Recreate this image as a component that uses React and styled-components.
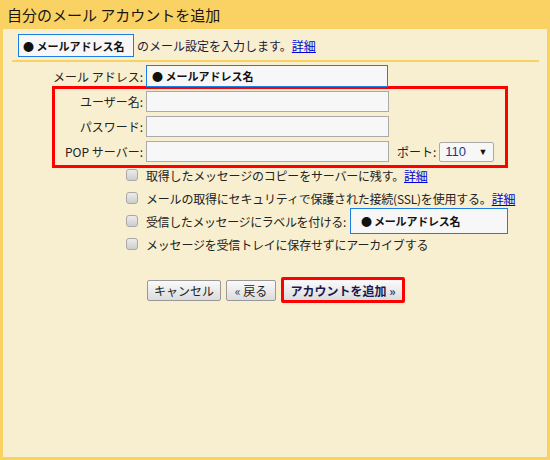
import React from 'react'
import styled, { createGlobalStyle } from 'styled-components'

const GlobalStyle = createGlobalStyle`
  body {
    margin: 0;
    font-family: "Noto Sans CJK JP", "Liberation Sans", sans-serif;
    color: #222;
  }
`

const Frame = styled.div`
  width: 550px;
  height: 460px;
  box-sizing: border-box;
  background: #fad264;
  padding: 0 3px 3px 3px;
  display: flex;
  flex-direction: column;
`

const TitleBar = styled.div`
  height: 29px;
  display: flex;
  align-items: center;
  padding-left: 4px;
  font-size: 15px;
  color: #1a1410;
`

const Content = styled.div`
  flex: 1;
  background: #f8efd0;
  padding: 5px 8px 0 9px;
  font-size: 12px;
`

const IntroRow = styled.div`
  display: flex;
  align-items: center;
  height: 23px;
  padding-left: 6px;
`

const NameBox = styled.div`
  box-sizing: border-box;
  width: ${p => p.$w}px;
  height: ${p => p.$h}px;
  border: 1px solid #1a7ee6;
  background: #f7f7f7;
  display: flex;
  align-items: center;
  padding-left: ${p => p.$pad}px;
  font-size: 11px;
  font-weight: bold;
  color: #111;
  white-space: nowrap;
`

const IntroText = styled.span`
  margin-left: 3px;
  color: #1c1838;
`

const Link = styled.a`
  color: #0000d8;
  text-decoration: underline;
  cursor: pointer;
`

const Divider = styled.div`
  margin-top: 3px;
  height: 2px;
  background: #fad264;
`

const MailRow = styled.div`
  display: grid;
  grid-template-columns: 131px 242px;
  column-gap: 3px;
  align-items: center;
  margin-top: 3px;
`

const Label = styled.span`
  text-align: right;
  white-space: nowrap;
`

const RedGroup = styled.div`
  box-sizing: border-box;
  width: 456px;
  margin: -1px 0 0 40px;
  border: 3px solid #ff0000;
  padding: 2px 0 3px 0;
  display: flex;
  flex-direction: column;
  gap: 4px;
`

const FieldRow = styled.div`
  display: grid;
  grid-template-columns: 88px 243px auto;
  column-gap: 3px;
  align-items: center;
`

const TextInput = styled.div`
  box-sizing: border-box;
  height: 21px;
  border: 1px solid #aaa;
  background: #f7f7f7;
`

const PortWrap = styled.div`
  display: flex;
  align-items: center;
  margin-left: 5px;
  gap: 3px;
`

const Select = styled.div`
  box-sizing: border-box;
  width: 55px;
  height: 20px;
  border: 1px solid #aaa;
  border-radius: 2px;
  background: #f7f7f7;
  display: flex;
  align-items: center;
  justify-content: space-between;
  padding: 0 6px 0 5px;
  font-family: "Liberation Sans", sans-serif;
  font-size: 13px;
  color: #1b3a80;
`

const Arrow = styled.span`
  font-size: 9px;
  color: #111;
`

const CheckList = styled.div`
  display: flex;
  flex-direction: column;
  gap: 9px;
  padding-left: 114px;
`

const CheckRow = styled.div`
  height: 14px;
  display: flex;
  align-items: center;
  white-space: nowrap;
  letter-spacing: -0.2px;
`

const Check = styled.span`
  box-sizing: border-box;
  width: 12px;
  height: 12px;
  border: 1px solid #a8a8a8;
  border-radius: 3px;
  background: linear-gradient(#ececec, #cdcdcd);
  margin-right: 8px;
  flex: none;
`

const LabelGap = styled.span`
  margin-right: 4px;
  letter-spacing: -0.4px;
`

const ButtonRow = styled.div`
  display: flex;
  align-items: center;
  gap: 5px;
  margin-top: 26px;
  padding-left: 135px;
`

const Button = styled.button`
  box-sizing: border-box;
  height: ${p => (p.$primary ? 26 : 21)}px;
  width: ${p => p.$w}px;
  padding: 0;
  border: ${p => (p.$primary ? '3px solid #ff0000' : '1px solid #999')};
  border-radius: 2px;
  background: linear-gradient(#fafafa, #dcdcdc);
  font-family: "Noto Sans CJK JP", "Liberation Sans", sans-serif;
  font-size: 12px;
  font-weight: ${p => (p.$primary ? 'bold' : 'normal')};
  color: ${p => (p.$primary ? '#1a1a50' : '#222')};
  cursor: pointer;
`

const Quote = styled.span`
  color: #1b3a80;
`

export default function App() {
  return (
    <>
      <GlobalStyle />
      <Frame>
        <TitleBar>自分のメール アカウントを追加</TitleBar>
        <Content>
          <IntroRow>
            <NameBox $w={116} $h={23} $pad={4}>● メールアドレス名</NameBox>
            <IntroText>
              のメール設定を入力します。<Link>詳細</Link>
            </IntroText>
          </IntroRow>
          <Divider />
          <MailRow>
            <Label>メール アドレス:</Label>
            <NameBox $w={242} $h={22} $pad={5}>● メールアドレス名</NameBox>
          </MailRow>
          <RedGroup>
            <FieldRow>
              <Label>ユーザー名:</Label>
              <TextInput />
            </FieldRow>
            <FieldRow>
              <Label>パスワード:</Label>
              <TextInput />
            </FieldRow>
            <FieldRow>
              <Label>POP サーバー:</Label>
              <TextInput />
              <PortWrap>
                <span>ポート:</span>
                <Select>
                  110 <Arrow>▼</Arrow>
                </Select>
              </PortWrap>
            </FieldRow>
          </RedGroup>
          <CheckList>
            <CheckRow>
              <Check />
              取得したメッセージのコピーをサーバーに残す。<Link>詳細</Link>
            </CheckRow>
            <CheckRow>
              <Check />
              メールの取得にセキュリティで保護された接続(SSL)を使用する。<Link>詳細</Link>
            </CheckRow>
            <CheckRow>
              <Check />
              <LabelGap>受信したメッセージにラベルを付ける:</LabelGap>
              <NameBox $w={158} $h={26} $pad={10}>● メールアドレス名</NameBox>
            </CheckRow>
            <CheckRow>
              <Check />
              メッセージを受信トレイに保存せずにアーカイブする
            </CheckRow>
          </CheckList>
          <ButtonRow>
            <Button $w={74}>キャンセル</Button>
            <Button $w={50}><Quote>«</Quote> 戻る</Button>
            <Button $w={124} $primary>アカウントを追加 <Quote>»</Quote></Button>
          </ButtonRow>
        </Content>
      </Frame>
    </>
  )
}
